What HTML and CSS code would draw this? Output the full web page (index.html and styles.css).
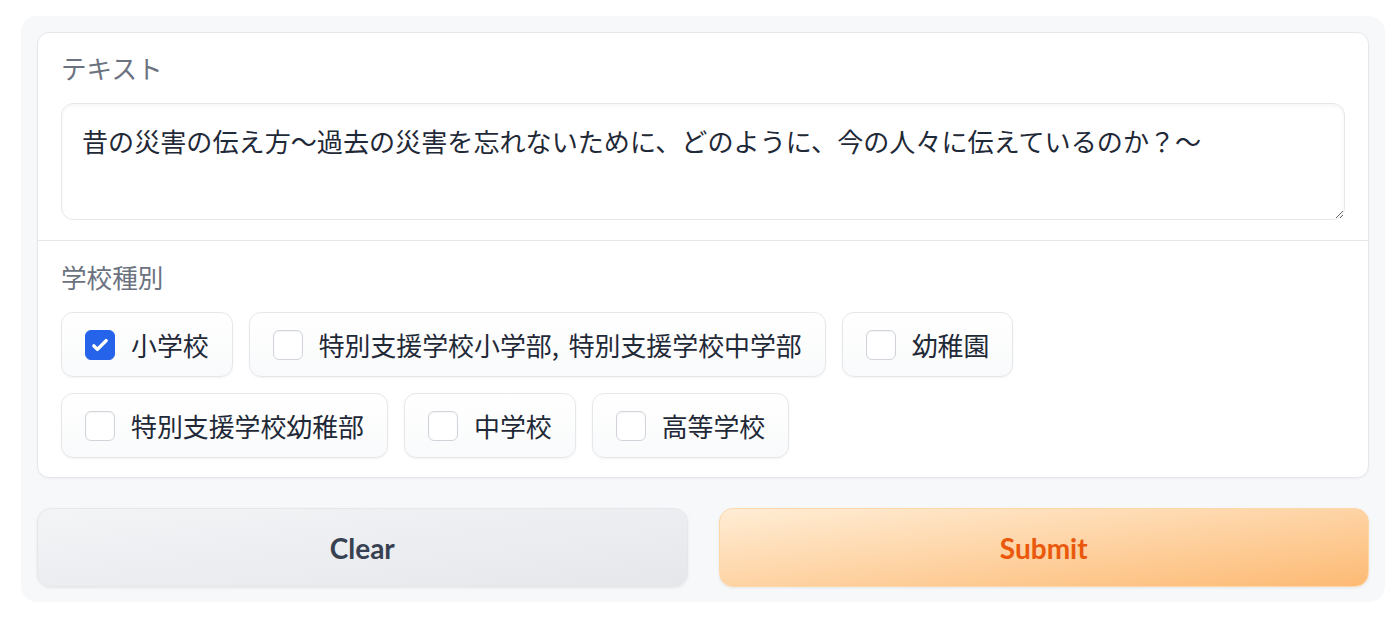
FILE: index.html
```html
<!DOCTYPE html>
<html lang="ja">
<head>
  <meta charset="UTF-8">
  <title>学校種別</title>
  <link rel="stylesheet" href="styles.css">
</head>
<body>
<div class="app">
  <div class="form">
    <div class="block">
      <label class="label" for="text">テキスト</label>
      <textarea id="text" class="input" rows="2">昔の災害の伝え方〜過去の災害を忘れないために、どのように、今の人々に伝えているのか？〜</textarea>
    </div>
    <div class="block">
      <div class="label">学校種別</div>
      <div class="choices">
        <label class="choice">
          <span class="box checked">
            <svg viewBox="0 0 16 16" width="28" height="28"><path fill="#fff" d="M12.207 4.793a1 1 0 010 1.414l-5 5a1 1 0 01-1.414 0l-2-2a1 1 0 011.414-1.414L6.5 9.086l4.293-4.293a1 1 0 011.414 0z"/></svg>
          </span>
          <span>小学校</span>
        </label>
        <label class="choice"><span class="box"></span><span>特別支援学校小学部<span class="sep">,</span> 特別支援学校中学部</span></label>
        <label class="choice"><span class="box"></span><span>幼稚園</span></label>
        <label class="choice"><span class="box"></span><span>特別支援学校幼稚部</span></label>
        <label class="choice"><span class="box"></span><span>中学校</span></label>
        <label class="choice"><span class="box"></span><span>高等学校</span></label>
      </div>
    </div>
  </div>
  <div class="actions">
    <button class="btn secondary">Clear</button>
    <button class="btn primary">Submit</button>
  </div>
</div>
</body>
</html>
```

FILE: styles.css
```css
body {
  margin: 0;
  background: #fff;
  font-family: "Noto Sans CJK JP", "Noto Sans", sans-serif;
  color: #1f2937;
}
.app {
  margin: 16px 15px 0 21px;
  padding: 16px 16px 15px;
  background: #f7f8fa;
  border-radius: 16px;
}
.form {
  background: #fff;
  border: 1px solid #e5e7eb;
  border-radius: 12px;
  overflow: hidden;
  box-shadow: 0 1px 2px rgba(0, 0, 0, 0.04);
}
.block {
  padding: 22px 23px 20px;
}
.block + .block {
  border-top: 1px solid #e5e7eb;
  padding: 23px 23px 19px;
}
.label {
  display: block;
  font-size: 25.6px;
  line-height: 26px;
  color: #6b7280;
  margin-bottom: 22px;
}
.input {
  display: block;
  box-sizing: border-box;
  width: 100%;
  height: 117px;
  margin: 0;
  padding: 18px 20px;
  font-family: inherit;
  font-size: 26.1px;
  line-height: 38px;
  color: #1f2937;
  border: 1px solid #e5e7eb;
  border-radius: 12px;
  box-shadow: inset 0 2px 4px rgba(0, 0, 0, 0.04);
  resize: vertical;
  outline: none;
}
.choices {
  display: flex;
  flex-wrap: wrap;
  gap: 16px;
}
.choice {
  display: flex;
  align-items: center;
  gap: 16px;
  box-sizing: border-box;
  height: 65px;
  padding: 0 23px;
  font-size: 25.9px;
  color: #1f2937;
  border: 1px solid #e5e7eb;
  border-radius: 12px;
  background: linear-gradient(to top, #f9fafb, #fff);
  box-shadow: 0 1px 2px rgba(0, 0, 0, 0.05);
}
.sep {
  margin-right: 4px;
}
.box {
  display: flex;
  align-items: center;
  justify-content: center;
  box-sizing: border-box;
  width: 30px;
  height: 30px;
  border: 1px solid #d1d5db;
  border-radius: 6px;
  background: #fff;
  box-shadow: inset 0 1px 2px rgba(0, 0, 0, 0.05);
}
.box.checked {
  background: #2563eb;
  border-color: #2563eb;
  box-shadow: none;
}
.actions {
  display: grid;
  grid-template-columns: 1fr 1fr;
  gap: 31px;
  margin-top: 30px;
}
.btn {
  height: 79px;
  font-family: "Lato", "Noto Sans", sans-serif;
  font-size: 28px;
  font-weight: 700;
  border-radius: 14px;
  box-shadow: 0 1px 3px rgba(0, 0, 0, 0.08);
}
.secondary {
  color: #374151;
  border: 1px solid #e5e7eb;
  background: linear-gradient(to bottom right, #f3f4f6, #e5e7eb);
}
.primary {
  color: #ea580c;
  border: 1px solid #fed7aa;
  background: linear-gradient(to bottom right, #ffedd5, #fdba74);
}
```
